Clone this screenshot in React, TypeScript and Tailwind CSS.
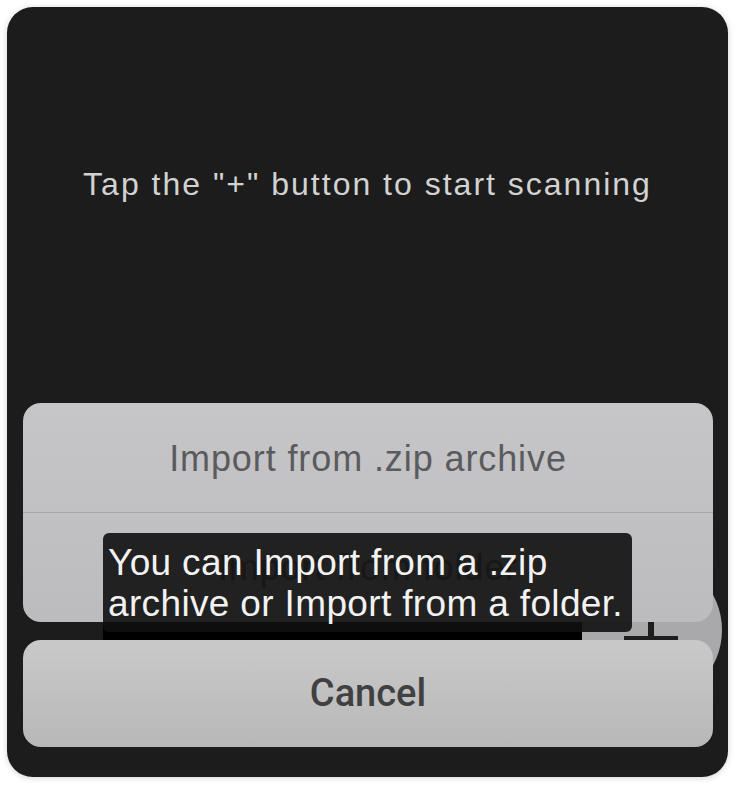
import * as React from 'react';

/* ========================= floating "+" button (behind the sheet) ========================= */
function ScanButton() {
  return (
    <div className="absolute left-[567px] top-[549px] z-0 flex h-[148px] w-[148px] items-center justify-center rounded-full bg-[#a9a9ab]">
      <div className="relative h-[54px] w-[54px] translate-x-[3px] translate-y-[8px]">
        <div className="absolute left-0 top-[25px] h-[4px] w-[54px] bg-[#1e1e1e]" />
        <div className="absolute left-[24px] top-0 h-[54px] w-[6px] bg-[#1e1e1e]" />
      </div>
    </div>
  );
}

/* ========================= action sheet ========================= */
function ActionSheet() {
  return (
    <div className="relative z-10 mt-auto flex flex-col gap-[18px] pb-[30px] pl-[16px] pr-[15px]">
      <div className="overflow-hidden rounded-[18px] bg-gradient-to-b from-[#c6c6c8] to-[#bcbcbe]">
        <button className="flex h-[109px] w-full items-center justify-center pt-[3px] text-[36px] tracking-[0.9px] text-[#5b5b5d]">
          Import from .zip archive
        </button>
        <div className="h-px bg-[#a6a6a8]" />
        <button className="flex h-[109px] w-full items-center justify-center text-[36px] tracking-[0.9px] text-[#5b5b5d]">
          Import from folder
        </button>
      </div>
      <button className="flex h-[107px] w-full items-center justify-center rounded-[18px] bg-gradient-to-b from-[#c9c9c9] to-[#b8b8b8] font-['Roboto',sans-serif] text-[38px] font-medium text-[#404042]">
        Cancel
      </button>
    </div>
  );
}

/* ========================= caption overlay ========================= */
function Caption() {
  return (
    <>
      <div className="absolute left-[96px] top-[615px] z-20 h-[18px] w-[479px] bg-black" />
      <div className="absolute left-[96px] top-[526px] z-30 w-[529px] rounded-[6px] bg-[rgba(16,16,16,0.9)] px-[5px] pb-[8px] pt-[9px] text-[37px] leading-[41px] tracking-[0.35px] text-[#f2f2f2]">
        You can Import from a .zip
        <br />
        archive or Import from a folder.
      </div>
    </>
  );
}

export default function App() {
  return (
    <div className="min-h-screen bg-white p-[7px] font-['Liberation_Sans',Arial,sans-serif]">
      <div className="relative flex h-[770px] w-[721px] flex-col overflow-hidden rounded-[26px] bg-[#1d1c1c] shadow-[0_1px_6px_rgba(0,0,0,0.18)]">
        <p className="pt-[157px] text-center text-[32px] leading-[40px] tracking-[2px] text-[#d2d2d2]">
          Tap the "+" button to start scanning
        </p>
        <ScanButton />
        <ActionSheet />
        <Caption />
      </div>
    </div>
  );
}
